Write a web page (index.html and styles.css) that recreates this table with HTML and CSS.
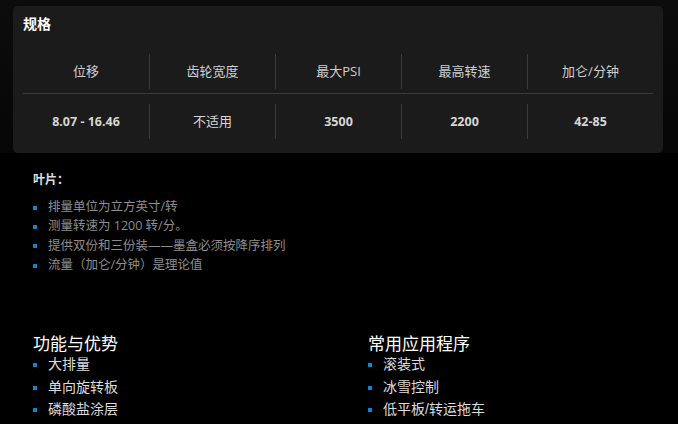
FILE: index.html
```html
<!DOCTYPE html>
<html lang="zh-CN">
<head>
    <meta charset="UTF-8">
    <meta name="viewport" content="width=device-width, initial-scale=1.0">
    <title>规格</title>
    <link rel="stylesheet" href="styles.css">
</head>
<body>
    <div class="top">
        <div class="card">
            <h3 class="card-title">规格</h3>
            <div class="spec-table">
                <div class="spec-row head">
                    <div class="cell"><span>位移</span></div>
                    <div class="cell"><span>齿轮宽度</span></div>
                    <div class="cell"><span>最大PSI</span></div>
                    <div class="cell"><span>最高转速</span></div>
                    <div class="cell"><span>加仑/分钟</span></div>
                </div>
                <div class="spec-row data">
                    <div class="cell"><span>8.07 - 16.46</span></div>
                    <div class="cell"><span class="na">不适用</span></div>
                    <div class="cell"><span>3500</span></div>
                    <div class="cell"><span>2200</span></div>
                    <div class="cell"><span>42-85</span></div>
                </div>
            </div>
        </div>
    </div>

    <div class="content">
        <div class="notes">
            <p class="notes-title">叶片：</p>
            <ul class="bullets small">
                <li>排量单位为立方英寸/转</li>
                <li>测量转速为 1200 转/分。</li>
                <li>提供双份和三份装——墨盒必须按降序排列</li>
                <li>流量（加仑/分钟）是理论值</li>
            </ul>
        </div>

        <div class="columns">
            <div class="col">
                <h4>功能与优势</h4>
                <ul class="bullets big">
                    <li>大排量</li>
                    <li>单向旋转板</li>
                    <li>磷酸盐涂层</li>
                </ul>
            </div>
            <div class="col">
                <h4>常用应用程序</h4>
                <ul class="bullets big">
                    <li>滚装式</li>
                    <li>冰雪控制</li>
                    <li>低平板/转运拖车</li>
                </ul>
            </div>
        </div>
    </div>
</body>
</html>
```

FILE: styles.css
```css
body {
    margin: 0;
    background-color: #000;
    font-family: "Open Sans", "Noto Sans CJK SC", sans-serif;
    color: #ddd;
}
.top {
    padding: 6px 15px 0 13px;
    background: linear-gradient(#0c0c0c, #060606);
}
.card {
    background-color: #1b1b1b;
    border-radius: 5px;
    padding: 8px 10px 10px;
}
.card-title {
    margin: 0 0 13px;
    font-size: 14px;
    line-height: 20px;
    font-weight: bold;
    color: #fff;
}
.spec-row {
    display: grid;
    grid-template-columns: repeat(5, 1fr);
}
.spec-row.head {
    padding: 7px 0 4px;
    border-bottom: 1px solid #3a3a3a;
    color: #cfcfcf;
    font-size: 13px;
}
.spec-row.data {
    padding: 10px 0 4px;
    color: #d6d6d6;
    font-size: 12.5px;
    font-weight: bold;
}
.spec-row.data .na {
    font-weight: normal;
    font-size: 13px;
}
.cell {
    height: 35px;
    line-height: 35px;
    text-align: center;
    border-left: 1px solid #3a3a3a;
}
.cell:first-child {
    border-left: none;
}
.content {
    padding: 0 20px 0 33px;
}
.notes {
    padding-top: 18px;
}
.notes-title {
    margin: 0 0 8px;
    font-size: 12px;
    line-height: 18px;
    font-weight: bold;
    color: #e0e0e0;
}
.bullets {
    list-style: none;
    margin: 0;
    padding: 0;
}
.bullets li {
    position: relative;
    padding-left: 15px;
}
.bullets li::before {
    content: "";
    position: absolute;
    left: 0;
    top: 50%;
    width: 4px;
    height: 4px;
    margin-top: -1px;
    background-color: #1584cc;
}
.bullets.small li {
    font-size: 12.5px;
    line-height: 19.3px;
    color: #8e8e8e;
}
.bullets.big li {
    font-family: "Liberation Sans", "Noto Sans CJK SC", sans-serif;
    font-size: 14px;
    line-height: 22.5px;
    color: #dcdcdc;
}
.columns {
    display: grid;
    grid-template-columns: 310px 310px;
    column-gap: 25px;
    margin-top: 57px;
}
.col h4 {
    margin: 0;
    padding-top: 5px;
    font-family: "Liberation Sans", "Noto Sans CJK SC", sans-serif;
    font-size: 17px;
    line-height: 17px;
    font-weight: normal;
    color: #fff;
}
```
